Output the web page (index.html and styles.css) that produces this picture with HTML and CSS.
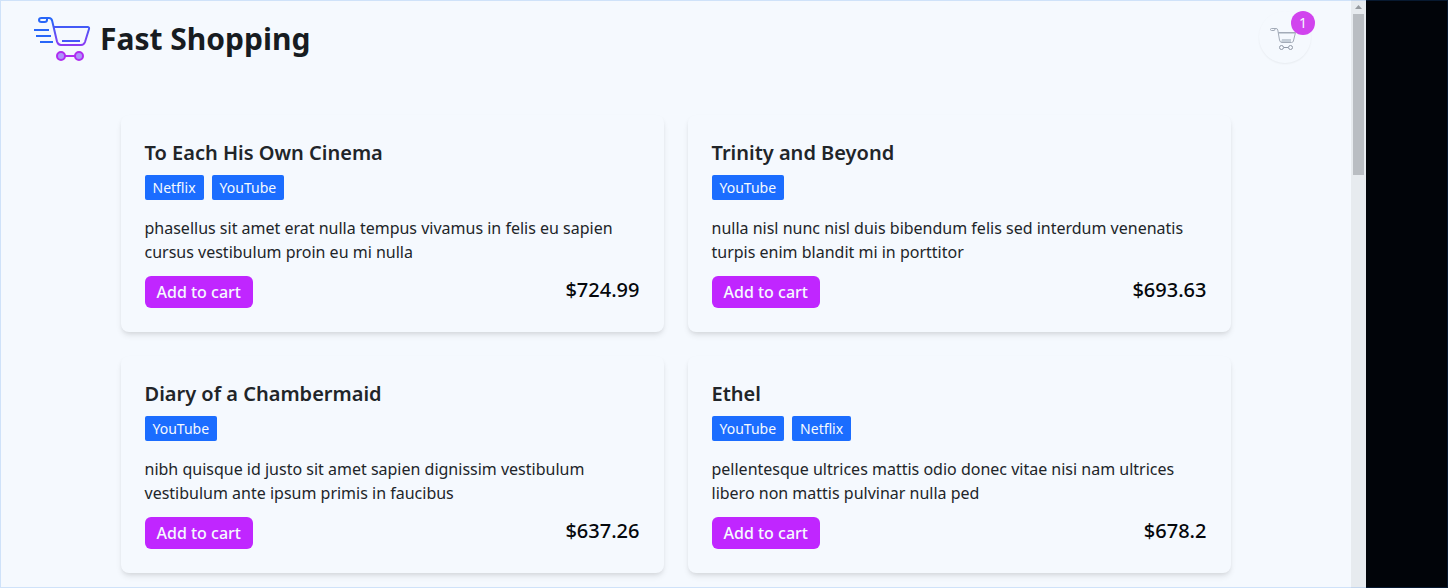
FILE: index.html
```html
<!DOCTYPE html>
<html lang="en">
<head>
<meta charset="utf-8">
<meta name="viewport" content="width=device-width, initial-scale=1">
<title>Fast Shopping</title>
<link rel="stylesheet" href="styles.css">
</head>
<body>
<div class="frame">
  <div class="shop">
    <header class="header">
      <div class="brand">
        <svg class="brand-logo" viewBox="0 0 57 46" fill="none" aria-hidden="true">
          <defs>
            <linearGradient id="cart-ink" gradientUnits="userSpaceOnUse" x1="0" y1="4" x2="0" y2="36">
              <stop offset="0" stop-color="#2866f8"/>
              <stop offset="1" stop-color="#a62ff2"/>
            </linearGradient>
          </defs>
          <g stroke="#2866f8" stroke-width="2">
            <path d="M0 14H15M2 20H17M6 26H19"/>
            <path d="M12 2H7.500Q5 2 5 4T7.500 6H10.500Q13 6 13 4V3"/>
          </g>
          <path d="M7 2H15Q17.500 2 18.200 5L23 25.500Q24 29 27 29H47Q50 29 51 26L55 13Q55.600 11 53.500 11H20" stroke="url(#cart-ink)" stroke-width="2"/>
          <path d="M28 25.010L46 25" stroke="#4658f8" stroke-width="2"/>
          <path d="M31 40H41" stroke="#b02cf0" stroke-width="2"/>
          <g fill="#ad94fb" stroke="#b02cf0" stroke-width="2">
            <circle cx="27" cy="40" r="4"/>
            <circle cx="45" cy="40" r="4"/>
          </g>
        </svg>
        <h1 class="brand-name">Fast Shopping</h1>
      </div>
      <button class="cart" type="button" aria-label="Open cart, 1 item">
        <svg class="cart-icon" viewBox="0 0 26 24" fill="none" aria-hidden="true">
          <path d="M8 5H25.500L25 7H8.500Z" fill="#cbd3db"/>
          <path d="M12 12H21V15.500H11Z" fill="#c5ced8"/>
          <path d="M5 1.500H1.500Q.5 1.500 .5 2.500T1.500 3.500H4Q5 3.500 5 2M2 1.500H6Q7.500 1.500 7.800 3L9.500 13Q10 15.500 12 15.500H21.500Q23 15.500 23.400 14L25.500 5.500H8.500" stroke="#a3abb8"/>
          <path d="M14 20.500H18" stroke="#9098a6"/>
          <circle cx="11.500" cy="20.500" r="2" stroke="#9098a6"/>
          <circle cx="20.500" cy="20.500" r="2" stroke="#9098a6"/>
        </svg>
        <span class="cart-count">1</span>
      </button>
    </header>
    <main class="products">
      <article class="card">
        <h2 class="card-title">To Each His Own Cinema</h2>
        <div class="tags"><span class="tag">Netflix</span><span class="tag">YouTube</span></div>
        <p class="card-text">phasellus sit amet erat nulla tempus vivamus in felis eu sapien cursus vestibulum proin eu mi nulla</p>
        <div class="card-footer"><button class="add" type="button">Add to cart</button><span class="price">$724.99</span></div>
      </article>
      <article class="card">
        <h2 class="card-title">Trinity and Beyond</h2>
        <div class="tags"><span class="tag">YouTube</span></div>
        <p class="card-text">nulla nisl nunc nisl duis bibendum felis sed interdum venenatis turpis enim blandit mi in porttitor</p>
        <div class="card-footer"><button class="add" type="button">Add to cart</button><span class="price">$693.63</span></div>
      </article>
      <article class="card">
        <h2 class="card-title">Diary of a Chambermaid</h2>
        <div class="tags"><span class="tag">YouTube</span></div>
        <p class="card-text">nibh quisque id justo sit amet sapien dignissim vestibulum vestibulum ante ipsum primis in faucibus</p>
        <div class="card-footer"><button class="add" type="button">Add to cart</button><span class="price">$637.26</span></div>
      </article>
      <article class="card">
        <h2 class="card-title">Ethel</h2>
        <div class="tags"><span class="tag">YouTube</span><span class="tag">Netflix</span></div>
        <p class="card-text">pellentesque ultrices mattis odio donec vitae nisi nam ultrices libero non mattis pulvinar nulla ped</p>
        <div class="card-footer"><button class="add" type="button">Add to cart</button><span class="price">$678.2</span></div>
      </article>
    </main>
  </div>
  <div class="scrollbar" aria-hidden="true">
    <svg class="scroll-arrow" viewBox="0 0 15 14"><path d="M4 9L7.500 5L11 9Z" fill="#969a9f"/></svg>
    <div class="scroll-thumb"></div>
  </div>
  <div class="backdrop"></div>
</div>
</body>
</html>
```

FILE: styles.css
```css
* {
  box-sizing: border-box;
}

body {
  margin: 0;
  font-family: "Noto Sans", sans-serif;
  font-size: 16px;
  line-height: 24px;
  color: #212529;
  background: #f5f9fe;
}

h1,
h2,
p {
  margin: 0;
}

button {
  border: 0;
  font: inherit;
  cursor: pointer;
}

.frame {
  position: relative;
  display: flex;
  height: 100vh;
  overflow: hidden;
}

.frame::after {
  content: "";
  position: absolute;
  inset: 0;
  border: 1px solid rgba(40, 120, 230, 0.18);
  pointer-events: none;
}

.shop {
  flex: 1;
  min-width: 0;
}

.header {
  display: flex;
  align-items: flex-start;
  justify-content: space-between;
  padding: 11px 40px 0 34px;
}

.brand {
  display: flex;
  align-items: center;
  gap: 9px;
  padding-top: 5px;
}

.brand-logo {
  width: 57px;
  height: 46px;
}

.brand-name {
  font-size: 30px;
  line-height: 36px;
  font-weight: 700;
  color: #171c21;
}

.cart {
  position: relative;
  display: grid;
  place-items: center;
  width: 52px;
  height: 52px;
  padding: 4px 4px 0 0;
  border-radius: 50%;
  background: #f5f9fe;
  box-shadow: 0 1px 2px rgba(0, 0, 0, 0.06);
}

.cart-icon {
  width: 26px;
  height: 24px;
}

.cart-count {
  position: absolute;
  top: 0;
  right: -4px;
  width: 24px;
  height: 24px;
  border-radius: 50%;
  font-size: 14px;
  line-height: 24px;
  text-align: center;
  color: #f5f9fe;
  background: #d144ee;
}

.products {
  display: grid;
  grid-template-columns: repeat(2, minmax(0, 1fr));
  gap: 24px;
  max-width: 1110px;
  margin: 52px auto 24px;
}

.card {
  padding: 24px;
  border-radius: 8px;
  background: #f5f9fe;
  box-shadow: 0 4px 6px -1px rgba(0, 0, 0, 0.1), 0 2px 4px -1px rgba(0, 0, 0, 0.06);
}

.card-title {
  font-size: 20px;
  line-height: 28px;
  font-weight: 600;
}

.tags {
  display: flex;
  flex-wrap: wrap;
  gap: 8px;
  margin: 8px 0 16px;
}

.tag {
  padding: 0 8px;
  border-radius: 2px;
  font-size: 14px;
  line-height: 25px;
  color: #f5f9fe;
  background: #1b6dff;
}

.card-footer {
  display: flex;
  align-items: flex-start;
  justify-content: space-between;
  margin-top: 12px;
}

.add {
  padding: 4px 12px;
  border-radius: 6px;
  font-weight: 500;
  line-height: 24px;
  color: #f5f9fe;
  background: #c026ff;
}

.price {
  font-size: 20px;
  line-height: 28px;
  font-weight: 500;
  color: #05080c;
}

.scrollbar {
  flex: none;
  width: 15px;
  background: #e7ebef;
}

.scroll-arrow {
  display: block;
  width: 15px;
  height: 14px;
}

.scroll-thumb {
  height: 161px;
  margin: 0 2px;
  background: #b9bdc2;
}

.backdrop {
  flex: none;
  width: 82px;
  background: #010409;
}

@media (max-width: 900px) {
  .frame {
    height: auto;
  }

  .products {
    grid-template-columns: minmax(0, 1fr);
    padding: 0 24px;
  }
}
```
